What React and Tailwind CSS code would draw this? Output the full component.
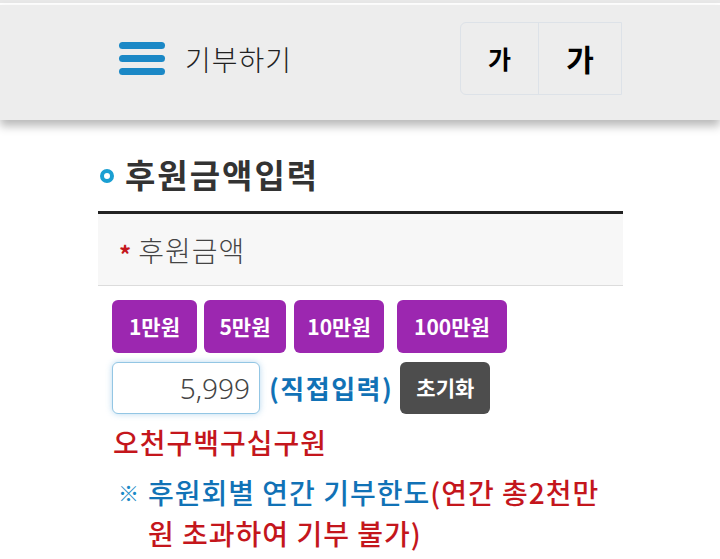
export default function App() {
  const font = { fontFamily: '"Noto Sans CJK KR", "Noto Sans", sans-serif' };
  return (
    <div className="w-[720px] h-[559px] overflow-hidden bg-white" style={font}>
      <div className="h-[5px] bg-[#e8e8e8] border-b-2 border-white" />
      <header className="relative z-10 h-[115px] bg-[#ededed] flex items-center pb-[8px] pl-[119px] pr-[98px] shadow-[0_6px_9px_rgba(0,0,0,0.28)]">
        <div className="flex flex-col gap-[6px] w-[46px]">
          <span className="block h-[7px] rounded-full bg-[#1b88c6]" />
          <span className="block h-[7px] rounded-full bg-[#1b88c6]" />
          <span className="block h-[7px] rounded-full bg-[#1b88c6]" />
        </div>
        <span className="ml-[20px] text-[28px] tracking-[1px] font-light text-[#222] leading-none">기부하기</span>
        <div className="ml-auto flex h-[73px] border border-[#dde2e8] rounded-l-[6px]">
          <button className="w-[78px] flex items-center justify-center text-[25px] font-bold text-black border-r border-[#dde2e8]">가</button>
          <button className="w-[82px] flex items-center justify-center text-[30px] font-bold text-black">가</button>
        </div>
      </header>

      <main className="ml-[98px] w-[525px]">
        <div className="mt-[34px] flex items-center h-[40px]">
          <span className="ml-[2px] mt-[3px] w-[14px] h-[14px] rounded-full border-[4px] border-[#1a9fd2] bg-white" />
          <h2 className="ml-[11px] text-[33px] tracking-[2px] font-bold text-[#333] leading-none">후원금액입력</h2>
        </div>
        <div className="mt-[17px] h-[3px] bg-[#222]" />
        <div className="h-[72px] bg-[#f7f7f7] border-b border-[#dcdcdc] flex items-center pl-[21px]">
          <span className="text-[#c4161c] text-[24px] font-bold leading-none mt-[8px]">*</span>
          <span className="ml-[7px] text-[28px] tracking-[1px] font-light text-[#444] leading-none">후원금액</span>
        </div>

        <div className="mt-[14px] ml-[14px] flex gap-[7px]">
          <button className="h-[53px] w-[85px] rounded-[6px] bg-[#9c27b0] text-white text-[21px] font-bold">1만원</button>
          <button className="h-[53px] w-[82px] rounded-[6px] bg-[#9c27b0] text-white text-[21px] font-bold">5만원</button>
          <button className="h-[53px] w-[90px] ml-[1px] rounded-[6px] bg-[#9c27b0] text-white text-[21px] font-bold">10만원</button>
          <button className="h-[53px] w-[110px] ml-[6px] rounded-[6px] bg-[#9c27b0] text-white text-[21px] font-bold">100만원</button>
        </div>

        <div className="mt-[9px] ml-[14px] flex items-center">
          <div className="h-[52px] w-[148px] rounded-[6px] border border-[#93c6e4] bg-white shadow-[0_0_6px_rgba(100,170,220,0.45)] flex items-center justify-end pr-[9px]">
            <span className="text-[28px] font-light text-[#444] leading-none" style={{ fontFamily: '"Noto Sans", sans-serif' }}>5,999</span>
          </div>
          <span className="ml-[9px] text-[26px] tracking-[1.5px] font-bold text-[#1172b6] leading-none">(직접입력)</span>
          <button className="ml-[7px] h-[52px] w-[90px] rounded-[6px] bg-[#4d4d4d] text-white text-[21px] font-bold">초기화</button>
        </div>

        <p className="mt-[10px] ml-[15px] text-[28px] tracking-[1px] font-medium text-[#c4161c] leading-[36px]">오천구백구십구원</p>

        <div className="mt-[12px] flex text-[28px] tracking-[1px] font-medium leading-[41px]">
          <span className="ml-[20px] w-[30px] shrink-0 text-[#1a8ac6] font-normal text-[21px]">※</span>
          <p className="flex-1">
            <span className="text-[#1172b6]">후원회별 연간 기부한도</span>
            <span className="text-[#c4161c]">(연간 총2천만 원 초과하여 기부 불가)</span>
          </p>
        </div>
      </main>
    </div>
  );
}
